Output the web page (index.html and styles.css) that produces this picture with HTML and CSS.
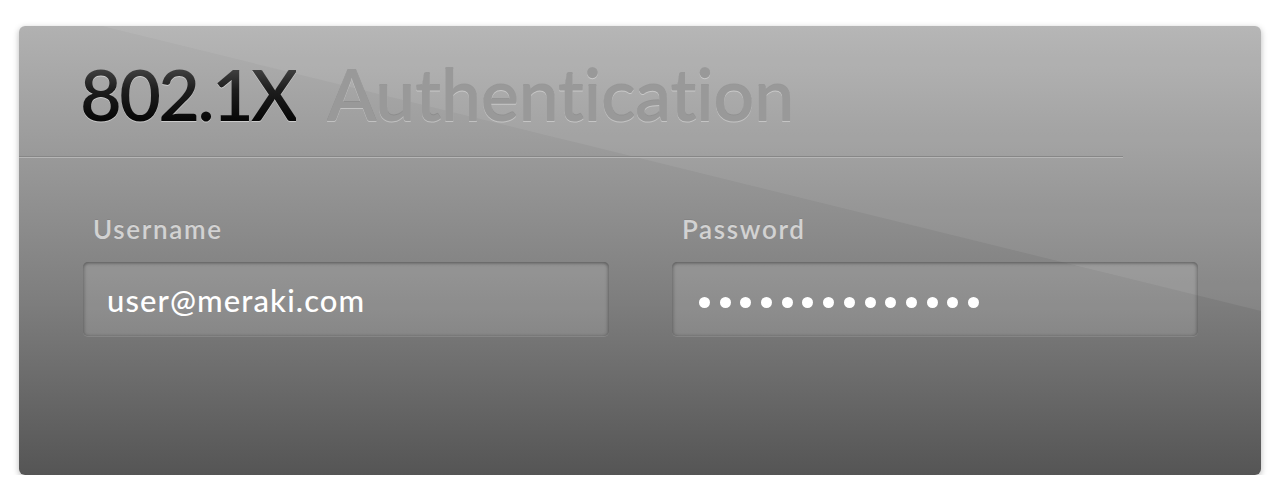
FILE: index.html
```html
<!DOCTYPE html>
<html>
<head>
<meta charset="utf-8">
<link rel="stylesheet" href="styles.css">
</head>
<body>
<div class="card">
  <div class="content">
    <div class="header">
      <h1 class="title"><span class="title-strong">802.1X</span><span class="title-light">Authentication</span></h1>
    </div>
    <div class="divider"></div>
    <div class="form">
      <div class="field">
        <div class="label">Username</div>
        <div class="input"><span class="value">user@meraki.com</span></div>
      </div>
      <div class="field">
        <div class="label">Password</div>
        <div class="input">
          <div class="dots">
            <span class="dot"></span><span class="dot"></span><span class="dot"></span><span class="dot"></span><span class="dot"></span><span class="dot"></span><span class="dot"></span><span class="dot"></span><span class="dot"></span><span class="dot"></span><span class="dot"></span><span class="dot"></span><span class="dot"></span><span class="dot"></span>
          </div>
        </div>
      </div>
    </div>
  </div>
</div>
</body>
</html>
```
FILE: styles.css
```css
html, body {
  margin: 0;
  padding: 0;
  background: #ffffff;
}
body {
  padding: 26px 22px 0 19px;
  font-family: "Lato", "Open Sans", sans-serif;
}
.card {
  position: relative;
  width: 1242px;
  height: 449px;
  border-radius: 6px;
  background: linear-gradient(to bottom, #b1b1b1 0%, #9a9a9a 28%, #7d7d7d 62%, #555555 100%);
  box-shadow: 0 2px 6px rgba(0,0,0,0.28);
  overflow: hidden;
}
.card::before {
  content: "";
  position: absolute;
  inset: 0;
  background: rgba(255,255,255,0.07);
  clip-path: polygon(83px 0, 100% 0, 100% 285px);
  z-index: 0;
}
.content {
  position: relative;
  z-index: 1;
}
.header {
  height: 130px;
  padding-left: 61px;
  display: flex;
  align-items: flex-end;
}
.title {
  margin: 0 0 27px 0;
  font-size: 72px;
  font-weight: 600;
  line-height: 1;
  display: flex;
  gap: 31px;
}
.title-strong {
  letter-spacing: -2.6px;
  background: linear-gradient(to bottom, #555 0%, #1e1e1e 45%, #000 100%);
  -webkit-background-clip: text;
  background-clip: text;
  -webkit-text-fill-color: transparent;
  color: transparent;
  filter: drop-shadow(0 1px 0 rgba(255,255,255,0.45));
}
.title-light {
  color: #999999;
  text-shadow: 0 -1px 0 rgba(0,0,0,0.12), 0 1px 0 rgba(255,255,255,0.35);
  letter-spacing: -0.5px;
}
.divider {
  width: 1104px;
  height: 1px;
  background: #878787;
  border-bottom: 1px solid #b6b6b6;
}
.form {
  display: grid;
  grid-template-columns: 1fr 1fr;
  gap: 63px;
  padding: 56px 63px 0 64px;
}
.label {
  padding-left: 10px;
  font-size: 26px;
  font-weight: 600;
  letter-spacing: 1.65px;
  color: #d2d2d2;
  line-height: 30px;
  text-shadow: 0 -1px 0 rgba(0,0,0,0.08);
}
.input {
  margin-top: 18px;
  height: 74px;
  border-radius: 5px;
  background: rgba(255,255,255,0.13);
  box-shadow: inset 0 2px 3px rgba(0,0,0,0.22), inset 2px 0 3px rgba(0,0,0,0.12), inset -2px 0 3px rgba(0,0,0,0.14), 0 1px 0 rgba(255,255,255,0.12);
  display: flex;
  align-items: center;
  padding-left: 24px;
}
.value {
  font-size: 31px;
  font-weight: 500;
  letter-spacing: 1.1px;
  color: #ffffff;
  margin-top: 2px;
}
.dots {
  display: flex;
  gap: 9.7px;
  margin-top: 6px;
  padding-left: 3px;
}
.dot {
  width: 11px;
  height: 11px;
  border-radius: 50%;
  background: #ffffff;
}
```
